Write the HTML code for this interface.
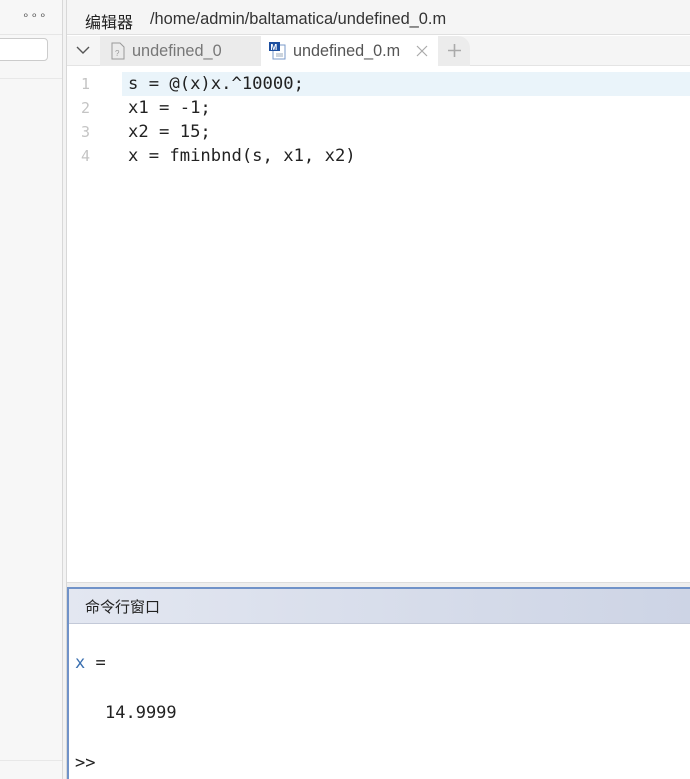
<!DOCTYPE html>
<html style="overflow:hidden"><head><meta charset="utf-8"><style>
*{margin:0;padding:0;box-sizing:border-box}
body{width:690px;height:779px;overflow:hidden;background:#fff;font-family:"Liberation Sans","Noto Sans CJK SC",sans-serif;position:relative}
.abs{position:absolute}
.mono{font-family:"DejaVu Sans Mono","Liberation Mono",monospace}
</style></head><body>
<div class="abs" style="left:0;top:0;width:62px;height:779px;background:#f7f7f7"></div>
<div class="abs" style="left:22px;top:8px;font-size:12px;color:#555;letter-spacing:1px">∘∘∘</div>
<div class="abs" style="left:0;top:34px;width:62px;height:1px;background:#e6e6e6"></div>
<div class="abs" style="left:-10px;top:38px;width:58px;height:23px;background:#fff;border:1px solid #ccc;border-radius:4px"></div>
<div class="abs" style="left:0;top:78px;width:62px;height:1px;background:#e8e8e8"></div>
<div class="abs" style="left:0;top:760px;width:62px;height:1px;background:#e8e8e8"></div>
<div class="abs" style="left:62px;top:0;width:1px;height:779px;background:#d8d8d8"></div>
<div class="abs" style="left:63px;top:0;width:3px;height:779px;background:#f3f3f3"></div>
<div class="abs" style="left:66px;top:0;width:1px;height:779px;background:#d8d8d8"></div>
<div class="abs" style="left:67px;top:0;width:623px;height:35px;background:#f5f5f5;border-bottom:1px solid #e0e0e0"></div>
<div class="abs" style="left:85px;top:9px;font-size:16px;color:#222">编辑器</div>
<div class="abs" style="left:150px;top:10px;font-size:16.4px;color:#333">/home/admin/baltamatica/undefined_0.m</div>
<div class="abs" style="left:67px;top:36px;width:623px;height:30px;background:#f5f5f5;border-bottom:1px solid #e4e4e4"></div>
<svg class="abs" style="left:76px;top:45px" width="14" height="10"><path d="M1 2 L7 8 L13 2" stroke="#555" stroke-width="1.4" fill="none"/></svg>
<div class="abs" style="left:100px;top:36px;width:161px;height:30px;background:#ebebeb"></div>
<svg class="abs" style="left:111px;top:42px" width="14" height="18"><path d="M1 1 H9 L13 5 V17 H1 Z" stroke="#999" fill="none"/><text x="4" y="14" font-size="8" fill="#999" font-family="Liberation Sans">?</text></svg>
<div class="abs" style="left:132px;top:42px;font-size:16.3px;color:#777">undefined_0</div>
<div class="abs" style="left:261px;top:36px;width:177px;height:31px;background:#fff"></div>
<svg class="abs" style="left:269px;top:42px" width="18" height="18"><rect x="4" y="3" width="12" height="14" fill="#fff" stroke="#7a9ac8"/><path d="M7 12h7M7 14h7" stroke="#9ab"/><rect x="0" y="0" width="11" height="9" fill="#1d4fa0"/><text x="1.5" y="8" font-size="8" font-weight="bold" fill="#fff" font-family="Liberation Sans">M</text></svg>
<div class="abs" style="left:293px;top:42px;font-size:16.2px;color:#555">undefined_0.m</div>
<svg class="abs" style="left:416px;top:45px" width="12" height="12"><path d="M1 1 L11 11 M11 1 L1 11" stroke="#aaa" stroke-width="1.2"/></svg>
<div class="abs" style="left:438px;top:36px;width:32px;height:30px;background:#ececec;border-radius:0 12px 0 0"></div>
<svg class="abs" style="left:448px;top:44px" width="13" height="13"><path d="M6.5 0 V13 M0 6.5 H13" stroke="#aaa" stroke-width="1.6"/></svg>
<div class="abs" style="left:122px;top:72px;width:568px;height:24px;background:#eaf4fa"></div>
<div class="abs mono" style="left:81px;top:72px;font-size:15px;line-height:24px;color:#c4c4c4">1<br>2<br>3<br>4</div>
<div class="abs mono" style="left:128px;top:72px;font-size:17.2px;line-height:24px;color:#222;white-space:pre">s = @(x)x.^10000;
x1 = -1;
x2 = 15;
x = fminbnd(s, x1, x2)</div>
<div class="abs" style="left:67px;top:582px;width:623px;height:5px;background:#eee;border-top:1px solid #ddd"></div>
<div class="abs" style="left:67px;top:587px;width:623px;height:192px;border:2px solid #7092c8;border-right:none;border-bottom:none"></div>
<div class="abs" style="left:69px;top:589px;width:621px;height:35px;background:linear-gradient(90deg,#e3e7f1,#cdd4e5);border-bottom:1px solid #c3c9d8"></div>
<div class="abs" style="left:85px;top:596px;font-size:15px;color:#222">命令行窗口</div>
<div class="abs mono" style="left:75px;top:653px;font-size:17px;color:#222"><span style="color:#3a6fb0">x</span> =</div>
<div class="abs mono" style="left:105px;top:703px;font-size:17px;color:#222">14.9999</div>
<div class="abs mono" style="left:75px;top:753px;font-size:17px;color:#222">&gt;&gt;</div>
</body></html>
